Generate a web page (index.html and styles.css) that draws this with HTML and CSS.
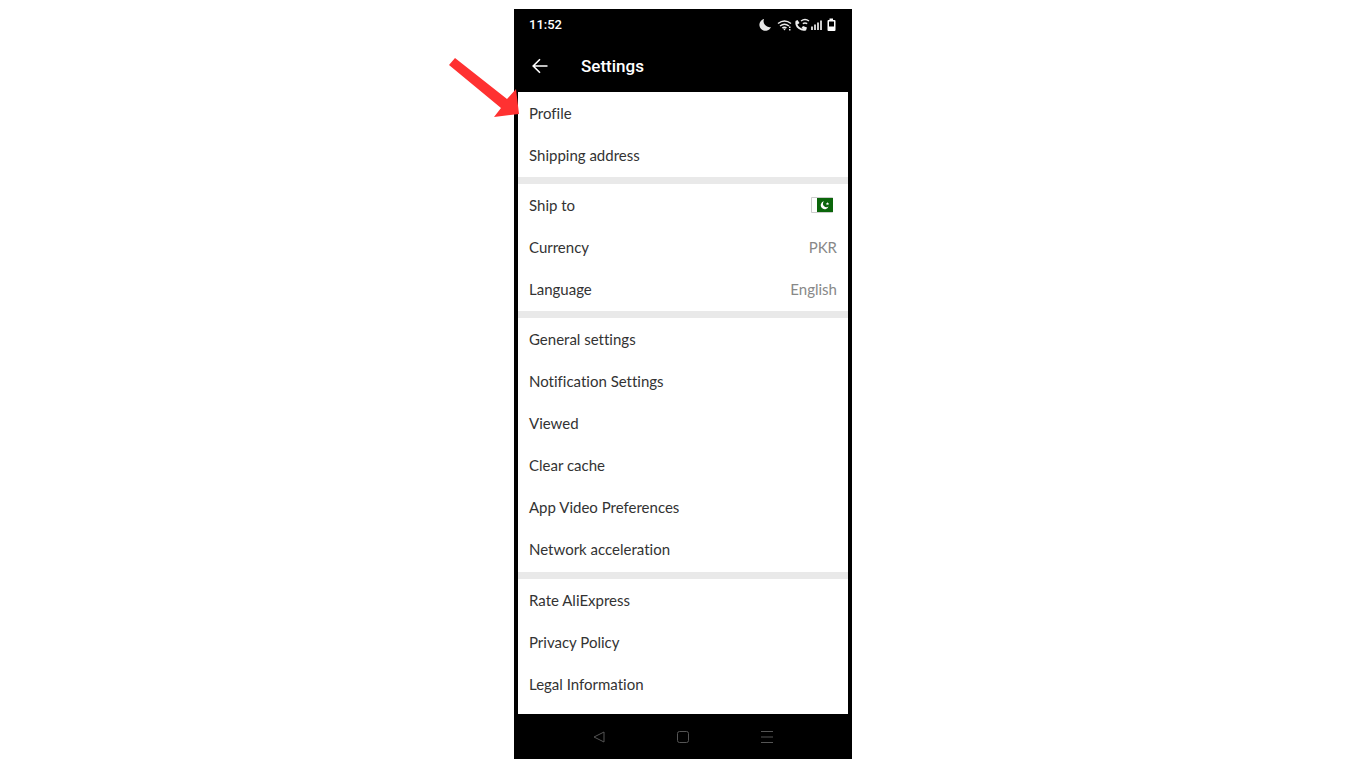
FILE: index.html
```html
<!DOCTYPE html>
<html lang="en">
<head>
<meta charset="utf-8">
<meta name="viewport" content="width=device-width, initial-scale=1">
<title>Settings</title>
<link rel="stylesheet" href="styles.css">
</head>
<body>
<div class="phone">
  <div class="status">
    <time>11:52</time>
    <svg class="status-icons" viewBox="0 0 78 16" width="78" height="16" aria-hidden="true">
      <path d="M5 2a6 6 0 1 0 7 8A6 6 0 0 1 5 2z" fill="#e8e8e8"/>
      <g fill="none" stroke="#e8e8e8" stroke-width="1.500">
        <path d="M19 6.500q6.500-5 13 0M21 9q4.500-3.500 9 0M23.300 11q2.200-1.700 4.200 0"/>
        <path d="M42 4q4-3 8 0M43.800 6.700q2.200-1.500 4.400 0" stroke-width="1.400"/>
      </g>
      <path d="M24 11.500h3l-1.500 2zM30 9.500h1.500V11H30zM30 12h1.500v1.500H30z" fill="#e8e8e8"/>
      <path d="M37.500 4.500q-1 4 2.500 6.500t6.500 1.500" fill="none" stroke="#eee" stroke-width="2"/>
      <path d="M36.500 4l2-1 2 3-2 1.500zM42.500 11l1.500-2 4 1.500-1 3z" fill="#eee"/>
      <path d="M52 9.500h2V13h-2zM55 7.500h2V13h-2zM58 5.500h2V13h-2zM61 3.500h2V13h-2z" fill="#ccc"/>
      <path d="M70.500 1.500h3.500V3h1.500q1 0 1 1v9q0 1-1 1H69.500q-1 0-1-1V4q0-1 1-1h1zM70 4.500v5h5v-5z" fill="#fff" fill-rule="evenodd"/>
    </svg>
  </div>
  <header class="header">
    <button class="back" type="button" aria-label="Back">
      <svg viewBox="0 0 16 16" width="16" height="16" aria-hidden="true"><path d="M15.500 8H1.500M8 1.200L1.200 8 8 14.800" fill="none" stroke="#fff" stroke-width="1.600"/></svg>
    </button>
    <h1 class="title">Settings</h1>
  </header>
  <main class="content">
    <section class="group">
      <a class="row" href="#profile">Profile</a>
      <a class="row" href="#shipping">Shipping address</a>
    </section>
    <section class="group">
      <a class="row" href="#ship-to">Ship to
        <svg class="flag" viewBox="0 0 22 16" width="22" height="16" role="img" aria-label="Pakistan"><path d="M.5.5h21v15H.5z" fill="#fff" stroke="#ccc"/><path d="M6 1h16v14H6z" fill="#0b660b"/><path d="M13 4.300a4 4 0 1 0 4.500 5.300A3.500 3.500 0 0 1 13 4.300z" fill="#fff"/><path d="M16.500 5l.5 1.200 1.300.1-1 .8.300 1.200-1.100-.7-1.100.7.300-1.200-1-.8 1.300-.1z" fill="#fff"/></svg>
      </a>
      <a class="row" href="#currency">Currency <span class="value">PKR</span></a>
      <a class="row" href="#language">Language <span class="value">English</span></a>
    </section>
    <section class="group group-long">
      <a class="row" href="#general">General settings</a>
      <a class="row" href="#notifications">Notification Settings</a>
      <a class="row" href="#viewed">Viewed</a>
      <a class="row" href="#cache">Clear cache</a>
      <a class="row" href="#video">App Video Preferences</a>
      <a class="row" href="#network">Network acceleration</a>
    </section>
    <section class="group">
      <a class="row" href="#rate">Rate AliExpress</a>
      <a class="row" href="#privacy">Privacy Policy</a>
      <a class="row" href="#legal">Legal Information</a>
    </section>
  </main>
  <nav class="nav">
    <button class="nav-button" type="button" aria-label="Back"><svg viewBox="0 0 12 12" width="12" height="12"><path d="M1 6l10-5v10z"/></svg></button>
    <button class="nav-button" type="button" aria-label="Home"><svg viewBox="0 0 12 12" width="12" height="12"><rect x=".5" y=".5" width="11" height="11" rx="2"/></svg></button>
    <button class="nav-button" type="button" aria-label="Menu"><svg viewBox="0 0 12 12" width="12" height="12"><path d="M0 .5h12M0 6h12M0 11.500h12"/></svg></button>
  </nav>
  <svg class="pointer" viewBox="0 0 70 60" width="70" height="60" aria-hidden="true"><path d="M0 7L6 0l52 41 9-10 3 25-25 3 7-9z" fill="#ff3131"/></svg>
</div>
</body>
</html>
```
FILE: styles.css
```css
* { box-sizing: border-box; }
body {
  margin: 0;
  padding: 9px 0;
  background: #fff;
  font-family: Lato, "Open Sans", sans-serif;
  font-size: 15px;
  font-variant-ligatures: none;
}
.phone {
  position: relative;
  display: flex;
  flex-direction: column;
  width: 100%;
  max-width: 338px;
  min-height: calc(100vh - 18px);
  margin: 0 auto;
  background: #000;
}
.status {
  display: flex;
  align-items: center;
  justify-content: space-between;
  height: 31px;
  padding: 0 15px;
  color: #fff;
  font: 500 13px/16px Roboto, sans-serif;
}
.header {
  display: flex;
  align-items: center;
  gap: 33px;
  height: 52px;
  padding: 0 18px;
}
.back {
  display: flex;
  padding: 0;
  border: 0;
  background: none;
}
.title {
  margin: 0;
  color: #fff;
  font: 500 17px/20px Roboto, sans-serif;
}
.content {
  display: flex;
  flex: 1;
  flex-direction: column;
  gap: 7px;
  margin: 0 4px;
  background: #e9e9e9;
}
.group {
  padding-bottom: 1px;
  background: #fff;
}
.group-long { padding-bottom: 2px; }
.group:last-child { flex: 1; }
.row {
  display: flex;
  align-items: center;
  justify-content: space-between;
  height: 42px;
  padding: 0 11px;
  color: #333;
  text-decoration: none;
}
.value { color: #888; }
.flag { margin-right: 4px; }
.nav {
  display: flex;
  align-items: center;
  justify-content: center;
  gap: 72px;
  height: 45px;
}
.nav-button {
  display: flex;
  padding: 0;
  border: 0;
  background: none;
  fill: none;
  stroke: #555;
}
.pointer {
  position: absolute;
  top: 49px;
  left: -65px;
}
```
